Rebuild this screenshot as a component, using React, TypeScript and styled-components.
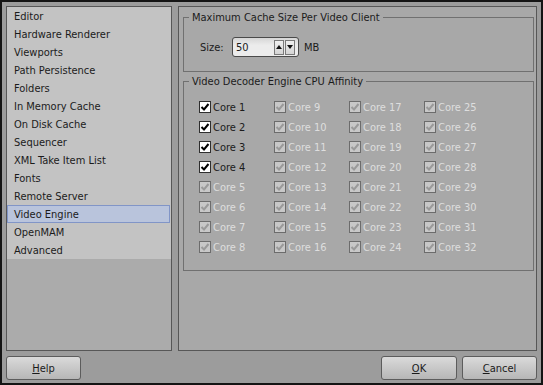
import React from 'react';
import styled, { createGlobalStyle } from 'styled-components';

const GlobalStyle = createGlobalStyle`
  html, body {
    margin: 0;
    padding: 0;
    background: #000;
  }
  * {
    box-sizing: border-box;
  }
`;

const uiFont = `"DejaVu Sans Condensed", "Liberation Sans", Arial, sans-serif`;

const Window = styled.div`
  width: 543px;
  height: 385px;
  border: 2px solid #141414;
  padding: 4px 4px 3px 4px;
  background: #9c9c9c;
  display: flex;
  flex-direction: column;
  gap: 5px;
  font-family: ${uiFont};
  font-size: 11px;
  color: #1b1b1b;
`;

const Body = styled.div`
  display: flex;
  gap: 6px;
  flex: 1;
  min-height: 0;
`;

const Sidebar = styled.div`
  width: 166px;
  border: 1px solid #575757;
  background: #ababab;
`;

const List = styled.ul`
  margin: 0;
  padding: 0;
  list-style: none;
  background: #c3c3c3;
`;

const Item = styled.li<{ $selected?: boolean }>`
  height: 18px;
  line-height: 17px;
  padding-left: 6px;
  margin-right: 1px;
  border: 1px solid ${p => (p.$selected ? '#8195c7' : 'transparent')};
  background: ${p => (p.$selected ? '#b9c4dc' : 'transparent')};
  white-space: nowrap;
`;

const Panel = styled.div`
  flex: 1;
  border: 1px solid #575757;
  background: #a8a8a8;
  padding: 3px 2px 0 4px;
  display: flex;
  flex-direction: column;
  gap: 2px;
`;

const Group = styled.fieldset`
  margin: 0;
  padding: 0;
  min-width: 0;
  border: 1px solid #707070;
`;

const Legend = styled.legend`
  margin-left: 5px;
  padding: 0 3px;
  height: 14px;
  line-height: 15px;
  white-space: nowrap;
`;

const SizeRow = styled.div`
  display: flex;
  align-items: center;
  height: 20px;
  margin: 13px 0 14px 16px;
`;

const Label = styled.span`
  width: 32px;
`;

const Spin = styled.div`
  width: 67px;
  height: 20px;
  border: 1px solid #4a4a4a;
  border-radius: 3px;
  background: linear-gradient(#d6d6d6, #ececec 40%);
  display: flex;
  align-items: center;
  padding: 0 3px 0 3px;
  gap: 1px;
`;

const SpinValue = styled.span`
  flex: 1;
`;

const SpinButton = styled.span`
  width: 10px;
  height: 15px;
  border: 1px solid #7a7a7a;
  background: linear-gradient(#f0f0f0, #d4d4d4);
  display: flex;
  align-items: center;
  justify-content: center;
`;

const Unit = styled.span`
  margin-left: 5px;
`;

const CoreGrid = styled.div`
  display: grid;
  grid-template-columns: repeat(4, 75px);
  grid-template-rows: repeat(8, 20px);
  grid-auto-flow: column;
  padding: 9px 0 13px 15px;
`;

const Core = styled.label<{ $disabled?: boolean }>`
  display: flex;
  align-items: center;
  gap: 2px;
  color: ${p => (p.$disabled ? '#dedede' : '#1b1b1b')};
`;

const Box = styled.span<{ $disabled?: boolean }>`
  width: 12px;
  height: 12px;
  border: 1px solid ${p => (p.$disabled ? '#6c6c6c' : '#2e2e2e')};
  background: ${p => (p.$disabled ? '#c8c8c8' : '#ffffff')};
  display: flex;
  align-items: center;
  justify-content: center;
`;

const Footer = styled.div`
  display: flex;
  align-items: center;
  height: 24px;
  gap: 5px;
`;

const Spacer = styled.div`
  flex: 1;
`;

const Button = styled.button<{ $width: number }>`
  width: ${p => p.$width}px;
  height: 24px;
  border: 1px solid #5c5c5c;
  border-radius: 3px;
  background: linear-gradient(#dadada, #b6b6b6);
  font-family: ${uiFont};
  font-size: 11px;
  color: #1b1b1b;
  padding: 0;
  u {
    text-decoration: underline;
  }
`;

const pages = [
  'Editor',
  'Hardware Renderer',
  'Viewports',
  'Path Persistence',
  'Folders',
  'In Memory Cache',
  'On Disk Cache',
  'Sequencer',
  'XML Take Item List',
  'Fonts',
  'Remote Server',
  'Video Engine',
  'OpenMAM',
  'Advanced',
];

const Check = ({ disabled }: { disabled?: boolean }) => (
  <svg width="10" height="10" viewBox="0 0 10 10">
    <path
      d="M1.5 5 L4 7.5 L8.5 2"
      fill="none"
      stroke={disabled ? '#9a9a9a' : '#000'}
      strokeWidth="2"
    />
  </svg>
);

const Arrow = ({ up }: { up?: boolean }) => (
  <svg width="6" height="4" viewBox="0 0 6 4">
    <path d={up ? 'M0 4 L3 0 L6 4 Z' : 'M0 0 L6 0 L3 4 Z'} fill="#111" />
  </svg>
);

export default function App() {
  const cores = Array.from({ length: 32 }, (_, i) => i + 1);
  return (
    <>
      <GlobalStyle />
      <Window>
        <Body>
          <Sidebar>
            <List>
              {pages.map(p => (
                <Item key={p} $selected={p === 'Video Engine'}>
                  {p}
                </Item>
              ))}
            </List>
          </Sidebar>
          <Panel>
            <Group>
              <Legend>Maximum Cache Size Per Video Client</Legend>
              <SizeRow>
                <Label>Size:</Label>
                <Spin>
                  <SpinValue>50</SpinValue>
                  <SpinButton>
                    <Arrow up />
                  </SpinButton>
                  <SpinButton>
                    <Arrow />
                  </SpinButton>
                </Spin>
                <Unit>MB</Unit>
              </SizeRow>
            </Group>
            <Group>
              <Legend>Video Decoder Engine CPU Affinity</Legend>
              <CoreGrid>
                {cores.map(n => {
                  const off = n > 4;
                  return (
                    <Core key={n} $disabled={off}>
                      <Box $disabled={off}>
                        <Check disabled={off} />
                      </Box>
                      Core {n}
                    </Core>
                  );
                })}
              </CoreGrid>
            </Group>
          </Panel>
        </Body>
        <Footer>
          <Button $width={75}>
            <u>H</u>elp
          </Button>
          <Spacer />
          <Button $width={76}>
            <u>O</u>K
          </Button>
          <Button $width={75}>
            <u>C</u>ancel
          </Button>
        </Footer>
      </Window>
    </>
  );
}
